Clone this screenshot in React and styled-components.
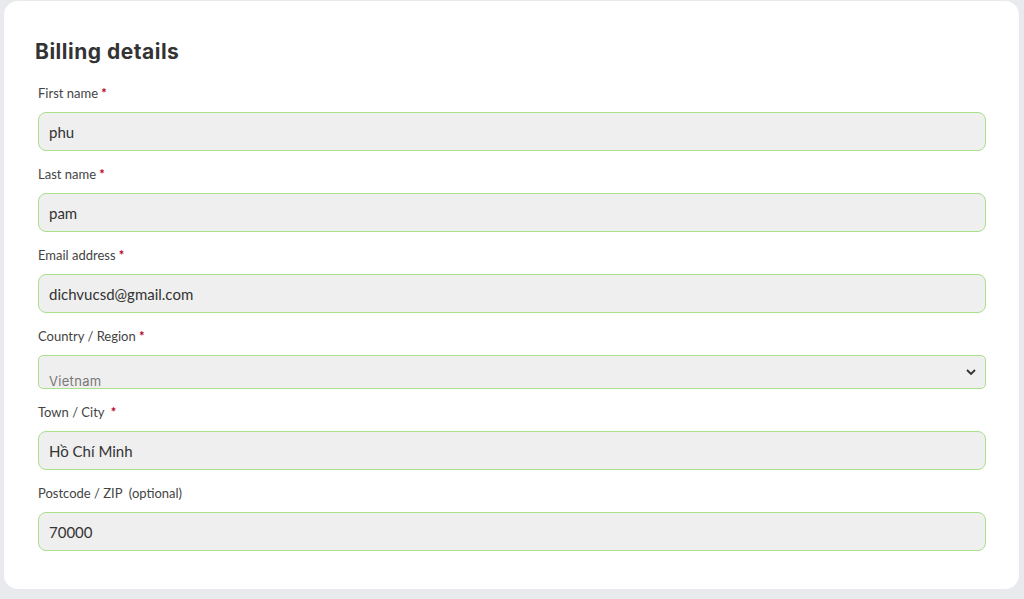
import React from "react";
import styled, { createGlobalStyle } from "styled-components";

const GlobalStyle = createGlobalStyle`
  * { box-sizing: border-box; }
  body {
    margin: 0;
    background: #e9eaee;
    font-family: Lato, "Liberation Sans", sans-serif;
  }
`;

const fields = [
  { label: "First name", required: true, value: "phu" },
  { label: "Last name", required: true, value: "pam" },
  { label: "Email address", required: true, value: "dichvucsd@gmail.com" },
  { label: "Country / Region", required: true, value: "Vietnam", select: true },
  { label: "Town / City ", required: true, value: "Hồ Chí Minh" },
  { label: "Postcode / ZIP  (optional)", required: false, value: "70000" },
];

function App() {
  return (
    <Page>
      <GlobalStyle />
      <Card>
        <Title>Billing details</Title>
        <Form>
          {fields.map((f) => (
            <Field key={f.label}>
              <Label>
                {f.label}
                {f.required && <Star> *</Star>}
              </Label>
              {f.select ? (
                <Select>
                  <SelectText>{f.value}</SelectText>
                  <svg width="10" height="6" viewBox="0 0 10 6" fill="none">
                    <path d="M1 1l4 4 4-4" stroke="#333" strokeWidth="1.8" />
                  </svg>
                </Select>
              ) : (
                <Input>{f.value}</Input>
              )}
            </Field>
          ))}
        </Form>
      </Card>
    </Page>
  );
}

export default App;

const Page = styled.div`
  padding: 1px 5px 10px 4px;
  height: 599px;
`;

const Card = styled.div`
  background: #fff;
  border-radius: 14px;
  height: 588px;
  padding: 37px 33px 0 34px;
`;

const Title = styled.h2`
  margin: 0 0 0 -3px;
  font-family: Inter, "Liberation Sans", sans-serif;
  font-weight: 700;
  font-size: 21px;
  line-height: 28px;
  color: #333;
  letter-spacing: 0.5px;
`;

const Form = styled.div`
  margin-top: 18px;
  display: flex;
  flex-direction: column;
  gap: 14px;
`;

const Field = styled.div`
  display: flex;
  flex-direction: column;
  gap: 10px;
`;

const Label = styled.div`
  font-size: 13px;
  line-height: 18px;
  color: #444;
  white-space: pre;
`;

const Star = styled.span`
  color: #b3001b;
  font-weight: 700;
`;

const Input = styled.div`
  height: 39px;
  border: 1px solid #a8e08c;
  border-radius: 8px;
  background: #efefef;
  padding: 0 10px;
  display: flex;
  align-items: center;
  font-size: 15px;
  color: #333;
`;

const Select = styled.div`
  height: 34px;
  border: 1px solid #a8e08c;
  border-radius: 5px;
  background: #efefef;
  padding: 0 9px 0 10px;
  display: flex;
  align-items: flex-end;
  justify-content: space-between;

  svg {
    align-self: center;
  }
`;

const SelectText = styled.span`
  font-family: Inter, "Liberation Sans", sans-serif;
  font-size: 13px;
  color: #777;
  line-height: 20px;
  letter-spacing: 0.3px;
  margin-bottom: -3px;
`;
